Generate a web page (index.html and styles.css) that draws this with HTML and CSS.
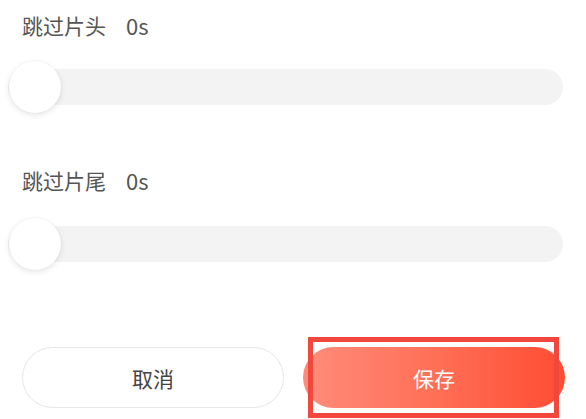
FILE: index.html
```html
<!DOCTYPE html>
<html lang="zh">
<head>
<meta charset="utf-8">
<link rel="stylesheet" href="styles.css">
</head>
<body>
<div class="page">
  <div class="label label-first"><span>跳过片头</span><span class="value">0s</span></div>
  <div class="slider slider-first">
    <div class="track"></div>
    <div class="thumb"></div>
  </div>
  <div class="label label-second"><span>跳过片尾</span><span class="value">0s</span></div>
  <div class="slider slider-second">
    <div class="track"></div>
    <div class="thumb"></div>
  </div>
  <div class="actions">
    <button class="btn btn-cancel">取消</button>
    <div class="save-wrap">
      <button class="btn btn-save">保存</button>
      <div class="highlight"></div>
    </div>
  </div>
</div>
</body>
</html>
```
FILE: styles.css
```css
html, body {
  margin: 0;
  padding: 0;
  background: #ffffff;
}
.page {
  width: 586px;
  height: 419px;
  overflow: hidden;
  font-family: "Noto Sans CJK SC", "Noto Sans", sans-serif;
  color: #555555;
}
.label {
  display: flex;
  align-items: center;
  gap: 20px;
  height: 30px;
  padding-left: 22px;
  font-size: 21px;
}
.label-first {
  margin-top: 10px;
}
.label-second {
  margin-top: 52px;
}
.value {
  font-size: 22px;
}
.slider {
  position: relative;
  display: flex;
  align-items: center;
  height: 52px;
  margin: 0 23px 0 8px;
}
.slider-first {
  margin-top: 21px;
}
.slider-second {
  margin-top: 23px;
}
.track {
  flex: 1;
  height: 36px;
  border-radius: 18px;
  background: #f3f3f3;
}
.thumb {
  position: absolute;
  left: 1px;
  top: 0;
  width: 52px;
  height: 52px;
  border-radius: 50%;
  background: #ffffff;
  box-shadow: 0 2px 6px rgba(0, 0, 0, 0.10), 0 0 2px rgba(0, 0, 0, 0.06);
}
.actions {
  display: flex;
  gap: 19px;
  margin-top: 77px;
  padding: 0 21px 0 22px;
}
.btn {
  display: flex;
  align-items: center;
  justify-content: center;
  width: 262px;
  height: 61px;
  border-radius: 31px;
  font-family: "Noto Sans CJK SC", "Noto Sans", sans-serif;
  font-size: 21px;
  padding: 0;
}
.btn-cancel {
  background: #ffffff;
  border: 1px solid #e6e6e6;
  color: #444444;
}
.save-wrap {
  position: relative;
  width: 262px;
  height: 61px;
}
.btn-save {
  border: none;
  color: #ffffff;
  background: linear-gradient(90deg, #ff8d7b 0%, #ff6f57 50%, #ff4d33 100%);
}
.highlight {
  position: absolute;
  left: 5px;
  top: -10px;
  width: 251px;
  height: 81px;
  box-sizing: border-box;
  border: 5px solid #f2473c;
}
```
